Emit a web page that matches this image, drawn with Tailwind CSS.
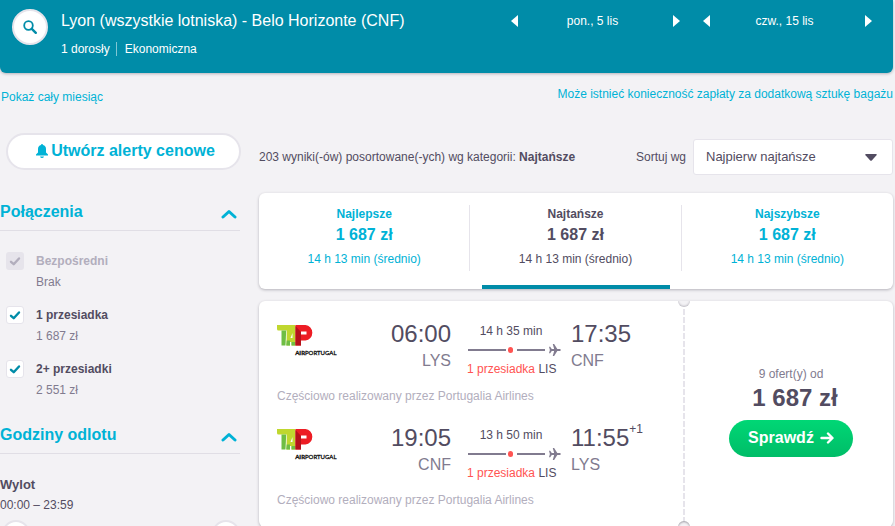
<!DOCTYPE html>
<html lang="pl">
<head>
    <meta charset="UTF-8">
    <meta name="viewport" content="width=device-width, initial-scale=1.0">
    <title>Lyon - Belo Horizonte</title>
    <script src="https://cdn.jsdelivr.net/npm/@tailwindcss/browser@4"></script>
</head>
<body class="bg-[#f3f2f5] font-['Liberation_Sans',Arial,sans-serif] text-xs text-[#524c61] pr-0.5 overflow-x-hidden">
    <!-- Shared icons -->
    <svg class="hidden">
        <symbol id="tap" viewBox="0 0 60 30" overflow="visible">
            <path d="M0 0h12.500v5.500H1.500Q0 5.500 0 4Z" fill="#c0d72f"/>
            <path d="M4.500 5.500h4.700L8.500 20.500H4.500Z" fill="#6fbe44"/>
            <path d="M11.500 0H18.500v20.500h-4v-3.500h-1.500v3.500H9.500L9.800 2Q10.200 0 11.500 0Z" fill="#c0d72f"/>
            <path d="M9.200 20.500 9.700 15.500h3.300v5ZM14.500 17h4v3.500h-4Z" fill="#6fbe44"/>
            <path d="M15.500 8v5h-2z" fill="#fff"/>
            <path d="M18.500 0H28.500a7.700 7.800 0 0 1 0 15.500h-4.500v5h-5.500Z" fill="#ed1c24"/>
            <path d="M18.500 1 24 7v13.500h-5.500Z" fill="#b5121b"/>
            <path d="M24 6.500h5.500v3H24z" fill="#fff"/>
            <text x="59.500" y="29.500" text-anchor="end" font-family="Lato, sans-serif" font-size="6" fill="#111" stroke="#111" stroke-width=".3"><tspan font-weight="bold">AIR</tspan>PORTUGAL</text>
        </symbol>
        <symbol id="plane" viewBox="0 0 12 12">
            <path d="M0 2.700h1.200L2.800 5h2.400L3.800 0h1.400l3.200 5H11q1 .2 1 1t-1 1H8.400L5.200 12H3.800L5.200 7H2.800L1.200 9.300H0L.9 6Z" fill="#817b8f"/>
        </symbol>
        <symbol id="chevron" viewBox="0 0 16 10">
            <path d="M2 8l6-5.500L14 8" fill="none" stroke="#00b2d6" stroke-width="3" stroke-linecap="round" stroke-linejoin="round"/>
        </symbol>
        <symbol id="check" viewBox="0 0 18 18">
            <path d="M5 9.800l2.700 2.400L13 6.500" fill="none" stroke="currentColor" stroke-width="2.400" stroke-linecap="round" stroke-linejoin="round"/>
        </symbol>
        <symbol id="prev" viewBox="0 0 7 12"><path d="M7 0v12L0 6z" fill="#fff"/></symbol>
        <symbol id="next" viewBox="0 0 7 12"><path d="M0 0v12l7-6z" fill="#fff"/></symbol>
    </svg>

    <!-- Search summary -->
    <header class="flex h-[73px] bg-[#008ca8] text-white rounded-b-md shadow-[0_1px_3px_rgba(37,32,51,0.3)] pl-3 pr-[21px]">
        <button class="mt-[9px] size-9 shrink-0 rounded-full bg-white border-2 border-[#e6e4eb] flex items-center justify-center" aria-label="Zmień wyszukiwanie">
            <svg class="size-4" viewBox="0 0 16 16" fill="none" stroke="#008ca8" stroke-linecap="round">
                <circle cx="6.500" cy="6.500" r="4.300" stroke-width="1.800"/>
                <path d="M9.800 9.800l4 4" stroke-width="2.400"/>
            </svg>
        </button>
        <div class="ml-[13px] pt-[11px] flex-1">
            <h1 class="text-base leading-5">Lyon (wszystkie lotniska) - Belo Horizonte (CNF)</h1>
            <p class="mt-[11px] flex leading-3.5"><span class="border-r border-white/50 pr-1.5 mr-2">1 dorosły</span><span>Ekonomiczna</span></p>
        </div>
        <div class="flex gap-[23px] pt-3">
            <div class="flex w-[169px] h-[18px] items-center">
                <button aria-label="Poprzedni dzień wylotu"><svg class="w-[7px] h-3"><use href="#prev"/></svg></button>
                <span class="flex-1 text-center pr-1.5">pon., 5 lis</span>
                <button aria-label="Następny dzień wylotu"><svg class="w-[7px] h-3"><use href="#next"/></svg></button>
            </div>
            <div class="flex w-[169px] h-[18px] items-center">
                <button aria-label="Poprzedni dzień powrotu"><svg class="w-[7px] h-3"><use href="#prev"/></svg></button>
                <span class="flex-1 text-center pr-1.5">czw., 15 lis</span>
                <button aria-label="Następny dzień powrotu"><svg class="w-[7px] h-3"><use href="#next"/></svg></button>
            </div>
        </div>
    </header>

    <div class="flex justify-between pt-3 h-[60px] leading-[18px] text-[#00b2d6]">
        <a href="#" class="pt-[3px] pl-px">Pokaż cały miesiąc</a>
        <a href="#">Może istnieć konieczność zapłaty za dodatkową sztukę bagażu</a>
    </div>

    <div class="flex gap-[19px]">
        <!-- Filters -->
        <aside class="w-60 shrink-0">
            <button class="ml-1.5 w-[235px] h-[37px] rounded-full bg-white border-2 border-[#e6e4eb] flex items-center justify-center gap-[3px] pl-1 pb-0.5 text-base font-bold text-[#00b2d6]">
                <svg class="w-3 h-3.5" viewBox="0 0 12 14" fill="#00b2d6"><path d="M6 0q1 0 1 1 3 .8 3 4v3.500l2 2v1H0v-1l2-2V5q0-3.200 3-4 0-1 1-1ZM4 12.500h4Q7.500 14 6 14t-2-1.500Z"/></svg>
                Utwórz alerty cenowe
            </button>

            <section class="mt-[31px]">
                <h2 class="border-b border-[#e0dee5] pb-[7px]">
                    <button class="flex w-full items-center justify-between pr-[3px] text-base leading-[22px] font-bold text-[#00b2d6]">Połączenia <svg class="w-4 h-2.5 mt-1"><use href="#chevron"/></svg></button>
                </h2>
                <div class="pl-1.5 pt-5 flex flex-col gap-3">
                    <label class="flex gap-3">
                        <span class="grid size-[18px] shrink-0 mt-px">
                            <input type="checkbox" checked disabled class="col-start-1 row-start-1 appearance-none size-[18px] rounded-[3px] bg-[#e6e4eb]">
                            <svg class="col-start-1 row-start-1 size-[18px] text-[#b2aebd] pointer-events-none"><use href="#check"/></svg>
                        </span>
                        <span class="leading-[21px]"><b class="block text-[#b2aebd]">Bezpośredni</b><span class="text-[#817b8f]">Brak</span></span>
                    </label>
                    <label class="flex gap-3">
                        <span class="grid size-[18px] shrink-0 mt-px">
                            <input type="checkbox" checked class="col-start-1 row-start-1 appearance-none size-[18px] rounded-[3px] bg-white border border-[#e6e4eb]">
                            <svg class="col-start-1 row-start-1 size-[18px] text-[#008ca8] pointer-events-none"><use href="#check"/></svg>
                        </span>
                        <span class="leading-[21px]"><b class="block">1 przesiadka</b><span class="text-[#817b8f]">1 687 zł</span></span>
                    </label>
                    <label class="flex gap-3">
                        <span class="grid size-[18px] shrink-0 mt-px">
                            <input type="checkbox" checked class="col-start-1 row-start-1 appearance-none size-[18px] rounded-[3px] bg-white border border-[#e6e4eb]">
                            <svg class="col-start-1 row-start-1 size-[18px] text-[#008ca8] pointer-events-none"><use href="#check"/></svg>
                        </span>
                        <span class="leading-[21px]"><b class="block">2+ przesiadki</b><span class="text-[#817b8f]">2 551 zł</span></span>
                    </label>
                </div>
            </section>

            <section class="mt-[23px]">
                <h2 class="border-b border-[#e0dee5] pb-[7px]">
                    <button class="flex w-full items-center justify-between pr-[3px] text-base leading-[22px] font-bold text-[#00b2d6]">Godziny odlotu <svg class="w-4 h-2.5 mt-1"><use href="#chevron"/></svg></button>
                </h2>
                <div class="pt-5 leading-[21px]">
                    <h3 class="text-[13px] leading-[21px] font-bold">Wylot</h3>
                    <p>00:00 – 23:59</p>
                    <div class="grid mt-1 pl-0.5">
                        <input type="range" min="0" max="1439" value="0" aria-label="Wylot od" class="col-start-1 row-start-1 w-full h-7 appearance-none bg-transparent [&::-webkit-slider-thumb]:appearance-none [&::-webkit-slider-thumb]:size-7 [&::-webkit-slider-thumb]:rounded-full [&::-webkit-slider-thumb]:bg-white [&::-webkit-slider-thumb]:border-2 [&::-webkit-slider-thumb]:border-[#e6e4eb]">
                        <input type="range" min="0" max="1439" value="1439" aria-label="Wylot do" class="col-start-1 row-start-1 w-full h-7 appearance-none bg-transparent [&::-webkit-slider-thumb]:appearance-none [&::-webkit-slider-thumb]:size-7 [&::-webkit-slider-thumb]:rounded-full [&::-webkit-slider-thumb]:bg-white [&::-webkit-slider-thumb]:border-2 [&::-webkit-slider-thumb]:border-[#e6e4eb]">
                    </div>
                </div>
            </section>
        </aside>

        <!-- Results -->
        <main class="flex-1 min-w-0 pt-1.5">
            <div class="flex items-center justify-between h-9">
                <p>203 wyniki(-ów) posortowane(-ych) wg kategorii: <b>Najtańsze</b></p>
                <div class="flex items-center gap-[7px]">
                    <label for="sort">Sortuj wg</label>
                    <div class="grid items-center">
                        <select id="sort" class="col-start-1 row-start-1 appearance-none w-[200px] h-9 bg-white border border-[#e6e4eb] rounded-[3px] pl-3 pr-8 text-[13px]">
                            <option>Najpierw najtańsze</option>
                        </select>
                        <svg class="col-start-1 row-start-1 justify-self-end mr-4 w-3 h-[7px] pointer-events-none" viewBox="0 0 12 7"><path d="M1 0h10q1.500 0 .5 1.200L7 6.300q-1 1-2 0L.5 1.200Q-.5 0 1 0Z" fill="#524c61"/></svg>
                    </div>
                </div>
            </div>

            <div class="mt-[18px] h-24 grid grid-cols-3 bg-white rounded-md shadow-[0_1px_3px_rgba(37,32,51,0.3)] text-center text-[#00b2d6]">
                <button class="flex flex-col pt-3">
                    <span class="w-full h-[66px] border-r border-[#e6e4eb]"><b class="block leading-[18px]">Najlepsze</b><b class="block text-base leading-6">1 687 zł</b><span class="block leading-6">14 h 13 min (średnio)</span></span>
                </button>
                <button class="flex flex-col justify-between pt-3 text-[#524c61]">
                    <span class="w-full h-[66px] border-r border-[#e6e4eb]"><b class="block leading-[18px]">Najtańsze</b><b class="block text-base leading-6">1 687 zł</b><span class="block leading-6">14 h 13 min (średnio)</span></span>
                    <span class="self-stretch mx-3 h-1 bg-[#008ca8]"></span>
                </button>
                <button class="flex flex-col pt-3">
                    <span class="w-full h-[66px]"><b class="block leading-[18px]">Najszybsze</b><b class="block text-base leading-6">1 687 zł</b><span class="block leading-6">14 h 13 min (średnio)</span></span>
                </button>
            </div>

            <!-- Ticket -->
            <article class="mt-3 flex bg-white rounded-md overflow-hidden shadow-[0_1px_3px_rgba(37,32,51,0.3)]">
                <div class="flex-1 pl-[18px] pt-[18px] pb-[18px]">
                    <div class="h-[104px]">
                        <div class="flex">
                            <svg class="w-[60px] h-[30px] mt-1.5 overflow-visible" role="img" aria-label="TAP Air Portugal"><use href="#tap"/></svg>
                            <div class="flex-1 text-right">
                                <div class="text-2xl leading-[30px]">06:00</div>
                                <div class="text-base leading-6 text-[#817b8f]">LYS</div>
                            </div>
                            <div class="mx-4 w-[88px] text-center pt-[3px]">
                                <div class="leading-[18px]">14 h 35 min</div>
                                <div class="flex items-center h-5 -mr-1.5 pl-px">
                                    <i class="h-0.5 w-[38px] bg-[#817b8f]"></i><i class="mx-0.5 size-1.5 rounded-full bg-[#ff5452]"></i><i class="h-0.5 w-7 mr-1 ml-0.5 bg-[#817b8f]"></i><svg class="size-3"><use href="#plane"/></svg>
                                </div>
                                <div class="leading-[18px] whitespace-nowrap"><span class="text-[#ff5452]">1 przesiadka</span> LIS</div>
                            </div>
                            <div class="w-[112px]">
                                <div class="text-2xl leading-[30px]">17:35</div>
                                <div class="text-base leading-6 text-[#817b8f]">CNF</div>
                            </div>
                        </div>
                        <p class="mt-[9px] leading-[18px] text-[#b2aebd]">Częściowo realizowany przez Portugalia Airlines</p>
                    </div>
                    <div>
                        <div class="flex">
                            <svg class="w-[60px] h-[30px] mt-1.5 overflow-visible" role="img" aria-label="TAP Air Portugal"><use href="#tap"/></svg>
                            <div class="flex-1 text-right">
                                <div class="text-2xl leading-[30px]">19:05</div>
                                <div class="text-base leading-6 text-[#817b8f]">CNF</div>
                            </div>
                            <div class="mx-4 w-[88px] text-center pt-[3px]">
                                <div class="leading-[18px]">13 h 50 min</div>
                                <div class="flex items-center h-5 -mr-1.5 pl-px">
                                    <i class="h-0.5 w-[38px] bg-[#817b8f]"></i><i class="mx-0.5 size-1.5 rounded-full bg-[#ff5452]"></i><i class="h-0.5 w-7 mr-1 ml-0.5 bg-[#817b8f]"></i><svg class="size-3"><use href="#plane"/></svg>
                                </div>
                                <div class="leading-[18px] whitespace-nowrap"><span class="text-[#ff5452]">1 przesiadka</span> LIS</div>
                            </div>
                            <div class="w-[112px]">
                                <div class="flex text-2xl leading-[30px]">11:55<span class="text-xs leading-3">+1</span></div>
                                <div class="text-base leading-6 text-[#817b8f]">LYS</div>
                            </div>
                        </div>
                        <p class="mt-[9px] leading-[18px] text-[#b2aebd]">Częściowo realizowany przez Portugalia Airlines</p>
                    </div>
                </div>
                <!-- perforation -->
                <div class="relative w-0.5 bg-[repeating-linear-gradient(#e6e4eb_0_6px,transparent_6px_8px)]">
                    <i class="absolute -left-[5px] -top-1.5 size-3 rounded-full bg-[#f3f2f5] shadow-[inset_0_-1px_2px_rgba(37,32,51,0.25)]"></i>
                    <i class="absolute -left-[5px] -bottom-1.5 size-3 rounded-full bg-[#f3f2f5] shadow-[inset_0_1px_2px_rgba(37,32,51,0.4)]"></i>
                </div>
                <div class="w-[208px] pt-16 pl-1 flex flex-col items-center">
                    <span class="leading-[18px] text-[#817b8f]">9 ofert(y) od</span>
                    <b class="pl-2 text-2xl leading-[30px]">1 687 zł</b>
                    <button class="mt-[7px] w-[124px] h-[37px] rounded-full bg-linear-to-b from-[#00d775] to-[#00bd68] text-white text-base font-bold flex items-center justify-center gap-1.5 pb-0.5">
                        Sprawdź
                        <svg class="w-3.5 h-3" viewBox="0 0 14 12" fill="none" stroke="#fff" stroke-width="2.400" stroke-linecap="round" stroke-linejoin="round"><path d="M1.500 6h10.500M8 1.500 12.500 6 8 10.500"/></svg>
                    </button>
                </div>
            </article>
        </main>
    </div>
</body>
</html>
